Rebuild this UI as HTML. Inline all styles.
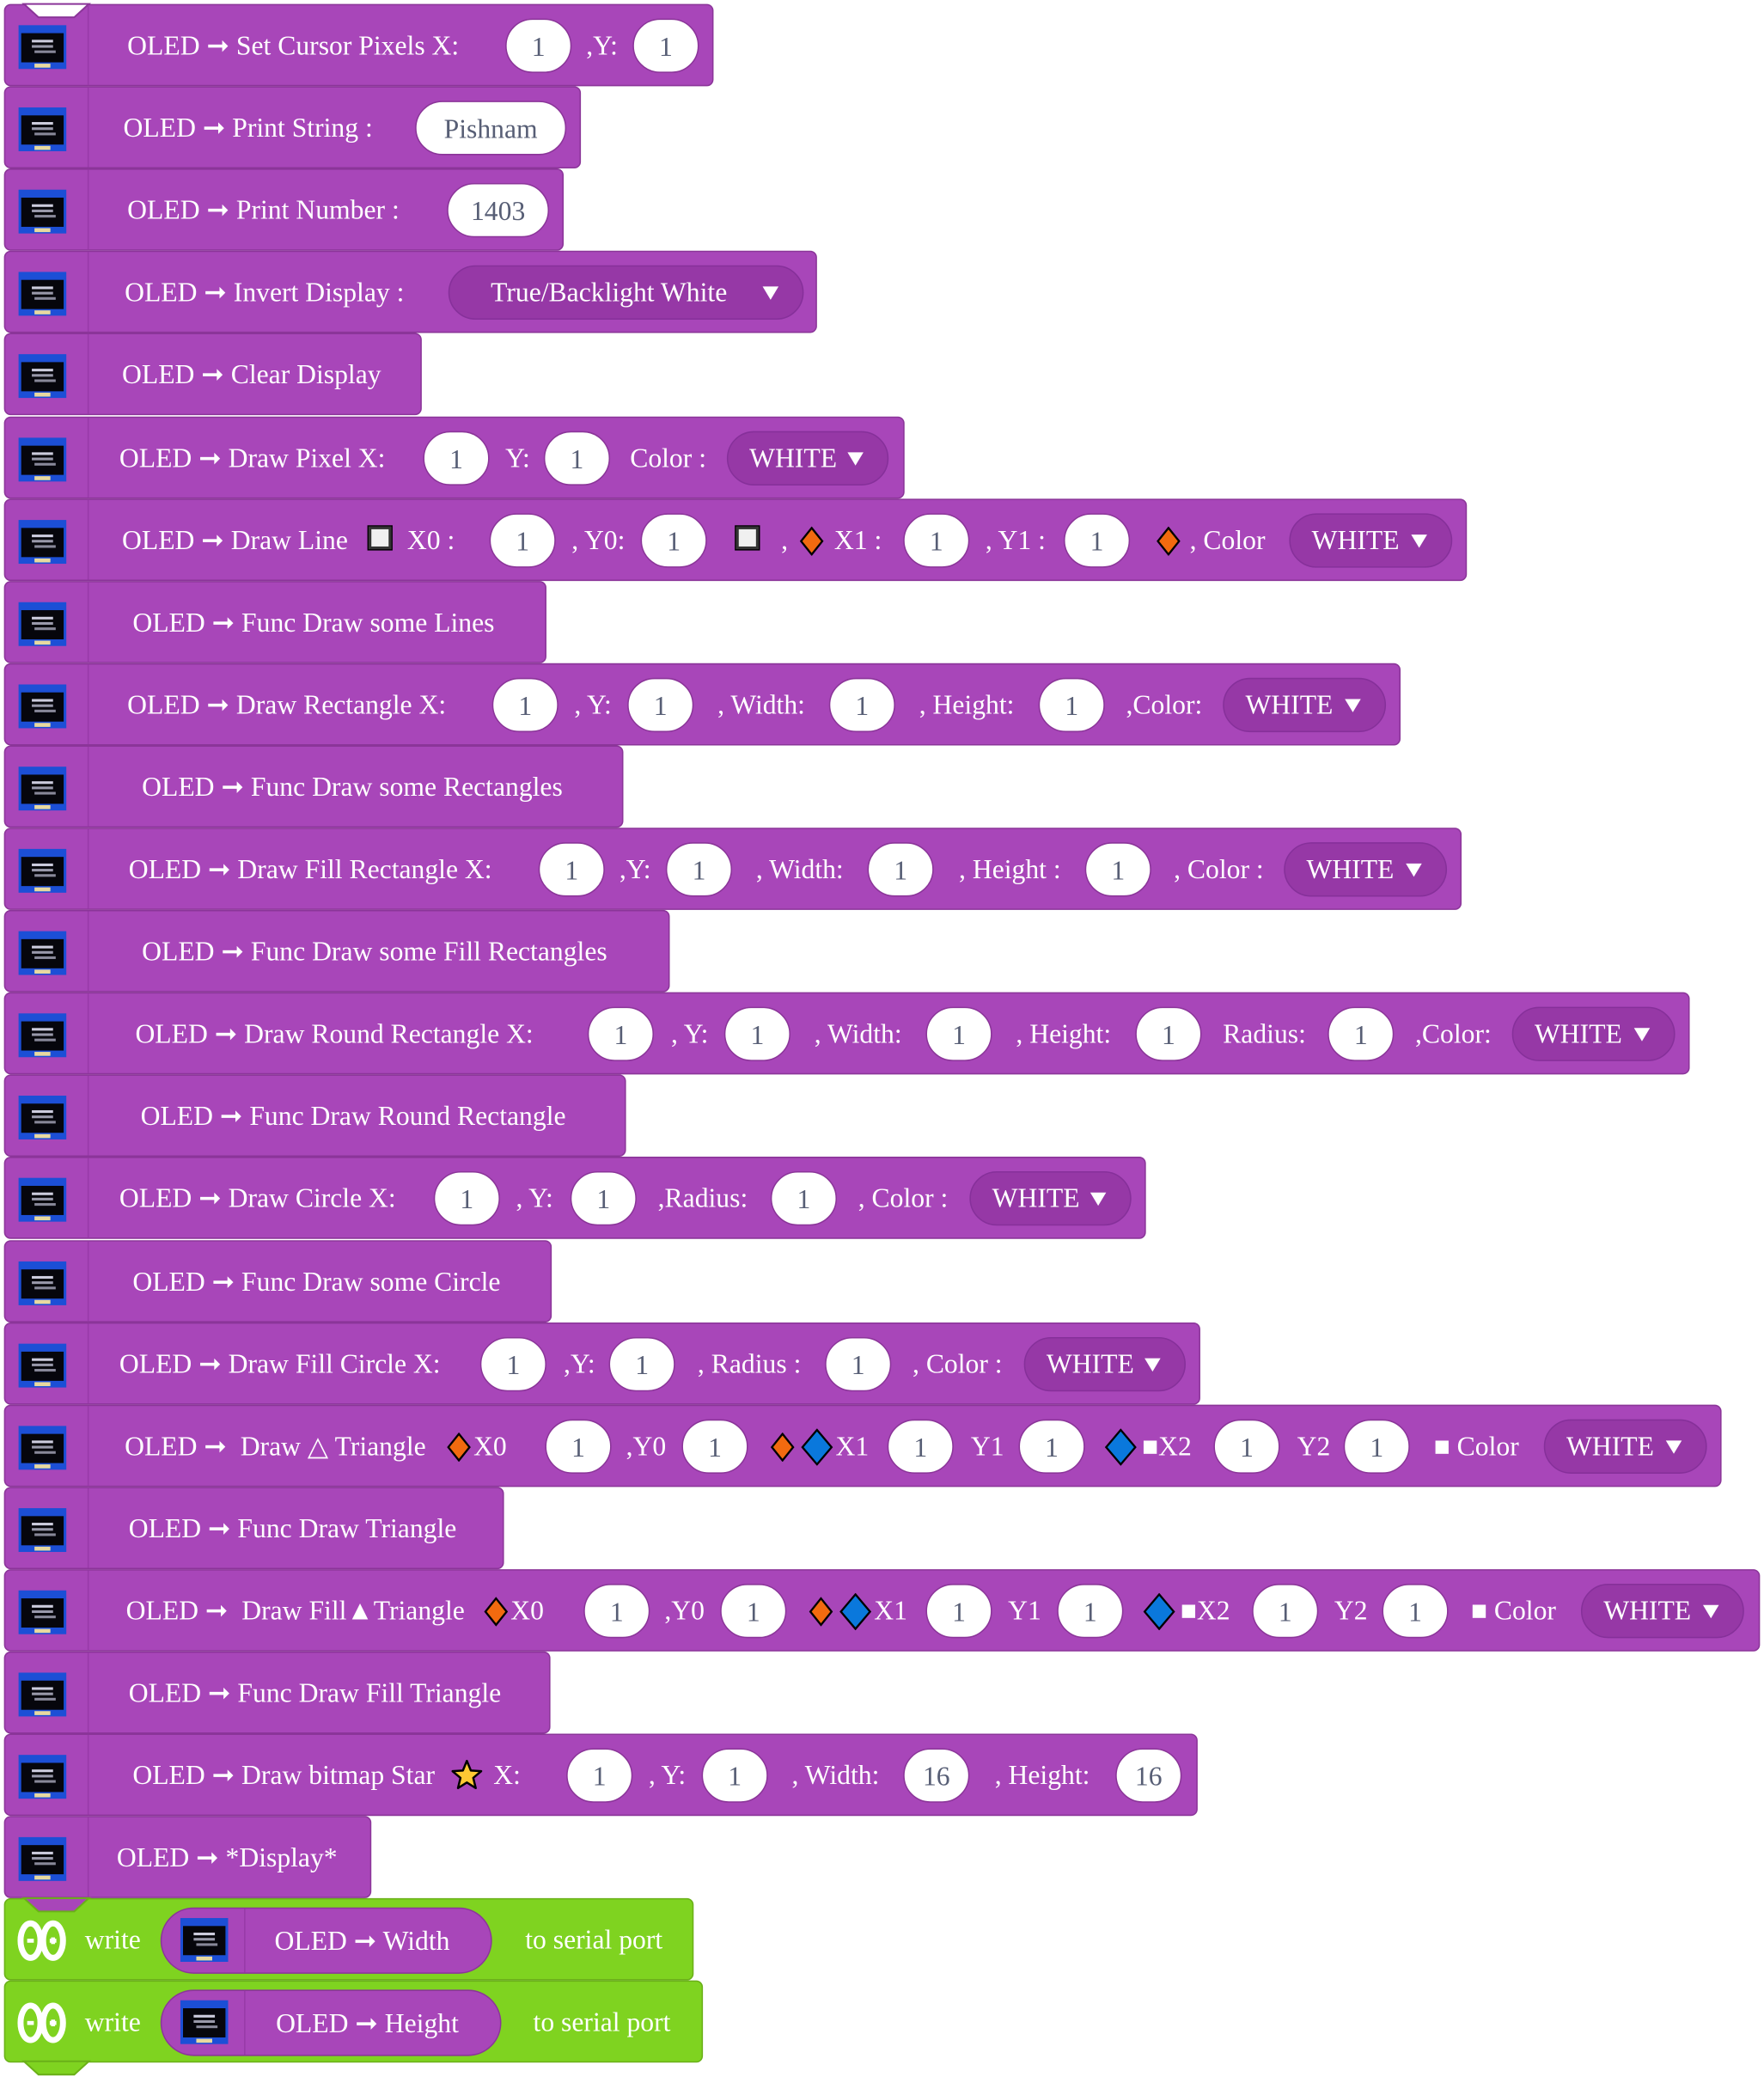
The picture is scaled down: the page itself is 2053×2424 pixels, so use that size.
<!DOCTYPE html>
<html><head><meta charset="utf-8">
<style>
html,body{margin:0;padding:0;background:#fff;width:2053px;height:2424px;overflow:hidden}
#w{position:absolute;left:0;top:0;width:1330px;height:1570px;transform:scale(1.5436);transform-origin:0 0;font-family:"Liberation Serif",serif;font-size:20.5px;color:#fff}
.r{position:absolute;left:3px;height:62px;background:#a846b9;border:1.3px solid #8b3599;border-radius:5px;box-sizing:border-box}
.g{background:#7fd320;border-color:#6ab018}
.r>svg.n{position:absolute;left:14px;top:-1.5px;overflow:visible}
.dv{position:absolute;left:62px;top:0;bottom:0;width:1px;background:#983aa8}
.g .dv{display:none}
.t{position:absolute;top:0;line-height:63px;white-space:nowrap}
.p{position:absolute;top:10px;height:41px;line-height:42px;background:#fff;border:1px solid #8b3599;border-radius:21px;box-sizing:border-box;color:#575e75;text-align:center}
.d{position:absolute;top:10px;height:41px;line-height:41px;background:#9638a6;border:1px solid #86309a;border-radius:21px;box-sizing:border-box;padding-left:16px;white-space:nowrap}
.d:after{content:"";position:absolute;right:18px;top:15px;width:0;height:0;border-left:6px solid transparent;border-right:6px solid transparent;border-top:10px solid #fff}
.ic{position:absolute;left:10px;top:15px;width:36px;height:33px;background:#1c4fd6;overflow:hidden}
.ic:before{content:"";position:absolute;left:2px;right:2px;top:6px;bottom:5px;background:#06060c}
.ic:after{content:"";position:absolute;left:12px;width:12px;bottom:1px;height:3px;background:#e8d9a0}
.ic i{position:absolute;left:10px;top:11px;width:16px;height:2px;background:#ccd;box-shadow:0 4px 0 #99a,2px 8px 0 #889}
.sq{position:absolute;top:20px;width:17px;height:17px;background:#f0f0f0;border:2.5px solid #333;box-sizing:border-box;outline:1px solid #000}
svg.ico{position:absolute}
.pp{position:absolute;top:6px;height:50px;background:#a846b9;border:1px solid #8b3599;border-radius:25px;box-sizing:border-box}
</style></head><body><div id="w">

<div class="r" style="top:3px;width:535px"><svg class="n" width="50" height="12"><polygon points="0,0 11,10 38,10 49,0" fill="#fff" stroke="#8b3599" stroke-width="1.3"/></svg><div class="dv"></div><div class="ic"><i></i></div>
<span class="t" style="left:92px">OLED ➞ Set Cursor Pixels X:</span><span class="p" style="left:377px;width:50px">1</span><span class="t" style="left:438px">,Y:</span><span class="p" style="left:473px;width:50px">1</span></div>

<div class="r" style="top:65.1px;width:435px"><div class="dv"></div><div class="ic"><i></i></div>
<span class="t" style="left:89px">OLED ➞ Print String :</span><span class="p" style="left:309px;width:114px">Pishnam</span></div>

<div class="r" style="top:127.2px;width:422px"><div class="dv"></div><div class="ic"><i></i></div>
<span class="t" style="left:92px">OLED ➞ Print Number :</span><span class="p" style="left:333px;width:77px">1403</span></div>

<div class="r" style="top:189.3px;width:613px"><div class="dv"></div><div class="ic"><i></i></div>
<span class="t" style="left:90px">OLED ➞ Invert Display :</span><span class="d" style="left:334px;width:268px;padding-left:31px">True/Backlight White</span></div>

<div class="r" style="top:251.4px;width:315px"><div class="dv"></div><div class="ic"><i></i></div>
<span class="t" style="left:88px">OLED ➞ Clear Display</span></div>

<div class="r" style="top:313.5px;width:679px"><div class="dv"></div><div class="ic"><i></i></div>
<span class="t" style="left:86px">OLED ➞ Draw Pixel X:</span><span class="p" style="left:315px;width:50px">1</span><span class="t" style="left:377px">Y:</span><span class="p" style="left:406px;width:50px">1</span><span class="t" style="left:471px">Color :</span><span class="d" style="left:544px;width:122px">WHITE</span></div>

<div class="r" style="top:375.6px;width:1103px"><div class="dv"></div><div class="ic"><i></i></div>
<span class="t" style="left:88px">OLED ➞ Draw Line</span><span class="sq" style="left:274px"></span><span class="t" style="left:303px">X0 :</span><span class="p" style="left:365px;width:50px">1</span><span class="t" style="left:427px">, Y0:</span><span class="p" style="left:479px;width:50px">1</span><span class="sq" style="left:551px"></span><span class="t" style="left:585px">,</span>
<svg class="ico" style="left:599px;top:20px" width="18" height="22"><polygon points="9,1 17,11 9,21 1,11" fill="#f26a0f" stroke="#000" stroke-width="1.5"/></svg><span class="t" style="left:625px">X1 :</span><span class="p" style="left:677px;width:50px">1</span><span class="t" style="left:739px">, Y1 :</span><span class="p" style="left:798px;width:50px">1</span>
<svg class="ico" style="left:868px;top:20px" width="18" height="22"><polygon points="9,1 17,11 9,21 1,11" fill="#f26a0f" stroke="#000" stroke-width="1.5"/></svg><span class="t" style="left:893px">, Color</span><span class="d" style="left:968px;width:123px">WHITE</span></div>

<div class="r" style="top:437.7px;width:409px"><div class="dv"></div><div class="ic"><i></i></div>
<span class="t" style="left:96px">OLED ➞ Func Draw some Lines</span></div>

<div class="r" style="top:499.8px;width:1053px"><div class="dv"></div><div class="ic"><i></i></div>
<span class="t" style="left:92px">OLED ➞ Draw Rectangle X:</span><span class="p" style="left:367px;width:50px">1</span><span class="t" style="left:429px">, Y:</span><span class="p" style="left:469px;width:50px">1</span><span class="t" style="left:537px">, Width:</span><span class="p" style="left:621px;width:50px">1</span><span class="t" style="left:689px">, Height:</span><span class="p" style="left:779px;width:50px">1</span><span class="t" style="left:845px">,Color:</span><span class="d" style="left:918px;width:123px">WHITE</span></div>

<div class="r" style="top:561.9px;width:467px"><div class="dv"></div><div class="ic"><i></i></div>
<span class="t" style="left:103px">OLED ➞ Func Draw some Rectangles</span></div>

<div class="r" style="top:624px;width:1099px"><div class="dv"></div><div class="ic"><i></i></div>
<span class="t" style="left:93px">OLED ➞ Draw Fill Rectangle X:</span><span class="p" style="left:402px;width:50px">1</span><span class="t" style="left:463px">,Y:</span><span class="p" style="left:498px;width:50px">1</span><span class="t" style="left:566px">, Width:</span><span class="p" style="left:650px;width:50px">1</span><span class="t" style="left:719px">, Height :</span><span class="p" style="left:814px;width:50px">1</span><span class="t" style="left:881px">, Color :</span><span class="d" style="left:964px;width:123px">WHITE</span></div>

<div class="r" style="top:686.1px;width:502px"><div class="dv"></div><div class="ic"><i></i></div>
<span class="t" style="left:103px">OLED ➞ Func Draw some Fill Rectangles</span></div>

<div class="r" style="top:748.2px;width:1271px"><div class="dv"></div><div class="ic"><i></i></div>
<span class="t" style="left:98px">OLED ➞ Draw Round Rectangle X:</span><span class="p" style="left:439px;width:50px">1</span><span class="t" style="left:502px">, Y:</span><span class="p" style="left:542px;width:50px">1</span><span class="t" style="left:610px">, Width:</span><span class="p" style="left:694px;width:50px">1</span><span class="t" style="left:762px">, Height:</span><span class="p" style="left:852px;width:50px">1</span><span class="t" style="left:918px">Radius:</span><span class="p" style="left:997px;width:50px">1</span><span class="t" style="left:1063px">,Color:</span><span class="d" style="left:1136px;width:123px">WHITE</span></div>

<div class="r" style="top:810.3px;width:469px"><div class="dv"></div><div class="ic"><i></i></div>
<span class="t" style="left:102px">OLED ➞ Func Draw Round Rectangle</span></div>

<div class="r" style="top:872.4px;width:861px"><div class="dv"></div><div class="ic"><i></i></div>
<span class="t" style="left:86px">OLED ➞ Draw Circle X:</span><span class="p" style="left:323px;width:50px">1</span><span class="t" style="left:385px">, Y:</span><span class="p" style="left:426px;width:50px">1</span><span class="t" style="left:492px">,Radius:</span><span class="p" style="left:577px;width:50px">1</span><span class="t" style="left:643px">, Color :</span><span class="d" style="left:727px;width:122px">WHITE</span></div>

<div class="r" style="top:934.5px;width:413px"><div class="dv"></div><div class="ic"><i></i></div>
<span class="t" style="left:96px">OLED ➞ Func Draw some Circle</span></div>

<div class="r" style="top:996.6px;width:902px"><div class="dv"></div><div class="ic"><i></i></div>
<span class="t" style="left:86px">OLED ➞ Draw Fill Circle X:</span><span class="p" style="left:358px;width:50px">1</span><span class="t" style="left:421px">,Y:</span><span class="p" style="left:455px;width:50px">1</span><span class="t" style="left:522px">, Radius :</span><span class="p" style="left:618px;width:50px">1</span><span class="t" style="left:684px">, Color :</span><span class="d" style="left:768px;width:122px">WHITE</span></div>

<div class="r" style="top:1058.7px;width:1295px"><div class="dv"></div><div class="ic"><i></i></div>
<span class="t" style="left:90px">OLED ➞ &nbsp;Draw △ Triangle</span>
<svg class="ico" style="left:333px;top:20px" width="18" height="22"><polygon points="9,1 17,11 9,21 1,11" fill="#f26a0f" stroke="#000" stroke-width="1.5"/></svg><span class="t" style="left:353px">X0</span><span class="p" style="left:407px;width:50px">1</span><span class="t" style="left:468px">,Y0</span><span class="p" style="left:510px;width:50px">1</span>
<svg class="ico" style="left:577px;top:20px" width="18" height="22"><polygon points="9,1 17,11 9,21 1,11" fill="#f26a0f" stroke="#000" stroke-width="1.5"/></svg><svg class="ico" style="left:600px;top:17px" width="24" height="28"><polygon points="12,1 23,14 12,27 1,14" fill="#0a78dc" stroke="#000" stroke-width="1.5"/></svg><span class="t" style="left:626px">X1</span><span class="p" style="left:665px;width:50px">1</span><span class="t" style="left:728px">Y1</span><span class="p" style="left:764px;width:50px">1</span>
<svg class="ico" style="left:829px;top:17px" width="24" height="28"><polygon points="12,1 23,14 12,27 1,14" fill="#0a78dc" stroke="#000" stroke-width="1.5"/></svg><span class="t" style="left:857px">■X2</span><span class="p" style="left:911px;width:50px">1</span><span class="t" style="left:974px">Y2</span><span class="p" style="left:1009px;width:50px">1</span><span class="t" style="left:1077px">■ Color</span><span class="d" style="left:1160px;width:123px">WHITE</span></div>

<div class="r" style="top:1120.8px;width:377px"><div class="dv"></div><div class="ic"><i></i></div>
<span class="t" style="left:93px">OLED ➞ Func Draw Triangle</span></div>

<div class="r" style="top:1182.9px;width:1324px"><div class="dv"></div><div class="ic"><i></i></div>
<span class="t" style="left:91px">OLED ➞ &nbsp;Draw Fill▲Triangle</span>
<svg class="ico" style="left:361px;top:20px" width="18" height="22"><polygon points="9,1 17,11 9,21 1,11" fill="#f26a0f" stroke="#000" stroke-width="1.5"/></svg><span class="t" style="left:381px">X0</span><span class="p" style="left:436px;width:50px">1</span><span class="t" style="left:497px">,Y0</span><span class="p" style="left:539px;width:50px">1</span>
<svg class="ico" style="left:606px;top:20px" width="18" height="22"><polygon points="9,1 17,11 9,21 1,11" fill="#f26a0f" stroke="#000" stroke-width="1.5"/></svg><svg class="ico" style="left:629px;top:17px" width="24" height="28"><polygon points="12,1 23,14 12,27 1,14" fill="#0a78dc" stroke="#000" stroke-width="1.5"/></svg><span class="t" style="left:655px">X1</span><span class="p" style="left:694px;width:50px">1</span><span class="t" style="left:756px">Y1</span><span class="p" style="left:793px;width:50px">1</span>
<svg class="ico" style="left:858px;top:17px" width="24" height="28"><polygon points="12,1 23,14 12,27 1,14" fill="#0a78dc" stroke="#000" stroke-width="1.5"/></svg><span class="t" style="left:886px">■X2</span><span class="p" style="left:940px;width:50px">1</span><span class="t" style="left:1002px">Y2</span><span class="p" style="left:1038px;width:50px">1</span><span class="t" style="left:1105px">■ Color</span><span class="d" style="left:1188px;width:123px">WHITE</span></div>

<div class="r" style="top:1245px;width:412px"><div class="dv"></div><div class="ic"><i></i></div>
<span class="t" style="left:93px">OLED ➞ Func Draw Fill Triangle</span></div>

<div class="r" style="top:1307.1px;width:900px"><div class="dv"></div><div class="ic"><i></i></div>
<span class="t" style="left:96px">OLED ➞ Draw bitmap Star</span>
<svg class="ico" style="left:336px;top:18px" width="24" height="24" viewBox="0 0 24 24"><polygon points="12,1.5 15,8.8 22.8,9.3 16.8,14.3 18.7,22 12,17.8 5.3,22 7.2,14.3 1.2,9.3 9,8.8" fill="#ffc933" stroke="#000" stroke-width="1.6" stroke-linejoin="round"/></svg><span class="t" style="left:368px">X:</span><span class="p" style="left:423px;width:50px">1</span><span class="t" style="left:485px">, Y:</span><span class="p" style="left:525px;width:50px">1</span><span class="t" style="left:593px">, Width:</span><span class="p" style="left:677px;width:50px">16</span><span class="t" style="left:746px">, Height:</span><span class="p" style="left:837px;width:50px">16</span></div>

<div class="r" style="top:1369.2px;width:277px"><div class="dv"></div><div class="ic"><i></i></div>
<span class="t" style="left:84px">OLED ➞ *Display*</span></div>

<div class="r g" style="top:1431.3px;width:520px"><svg class="n" width="50" height="12"><polygon points="0,0 11,10 38,10 49,0" fill="#a846b9" stroke="#6ab018" stroke-width="1.3"/></svg>
<svg class="ico" style="left:9px;top:13px" width="38" height="36" viewBox="0 0 38 36"><ellipse cx="10" cy="18" rx="7.5" ry="13" fill="none" stroke="#fff" stroke-width="4.5"/><ellipse cx="27" cy="18" rx="7.5" ry="13" fill="none" stroke="#fff" stroke-width="4.5"/><rect x="7.5" y="16.6" width="5" height="3" fill="#fff"/><rect x="24.5" y="16.6" width="5" height="3" fill="#fff"/><rect x="25.5" y="15.6" width="3" height="5" fill="#fff"/></svg>
<span class="t" style="left:60px">write</span>
<div class="pp" style="left:117px;width:250px"><div style="position:absolute;left:62px;top:0;bottom:0;width:1px;background:#983aa8"></div><div class="ic" style="left:14px;top:7px"><i></i></div><span class="t" style="left:85px;line-height:50px">OLED ➞ Width</span></div>
<span class="t" style="left:392px">to serial port</span></div>

<div class="r g" style="top:1493.4px;width:527px"><svg style="position:absolute;left:14px;top:60px;overflow:visible" width="50" height="12"><polygon points="0,0 11,10 38,10 49,0" fill="#7fd320" stroke="#6ab018" stroke-width="1.3"/></svg>
<svg class="ico" style="left:9px;top:13px" width="38" height="36" viewBox="0 0 38 36"><ellipse cx="10" cy="18" rx="7.5" ry="13" fill="none" stroke="#fff" stroke-width="4.5"/><ellipse cx="27" cy="18" rx="7.5" ry="13" fill="none" stroke="#fff" stroke-width="4.5"/><rect x="7.5" y="16.6" width="5" height="3" fill="#fff"/><rect x="24.5" y="16.6" width="5" height="3" fill="#fff"/><rect x="25.5" y="15.6" width="3" height="5" fill="#fff"/></svg>
<span class="t" style="left:60px">write</span>
<div class="pp" style="left:117px;width:257px"><div style="position:absolute;left:62px;top:0;bottom:0;width:1px;background:#983aa8"></div><div class="ic" style="left:14px;top:7px"><i></i></div><span class="t" style="left:86px;line-height:50px">OLED ➞ Height</span></div>
<span class="t" style="left:398px">to serial port</span></div>

</div></body></html>
